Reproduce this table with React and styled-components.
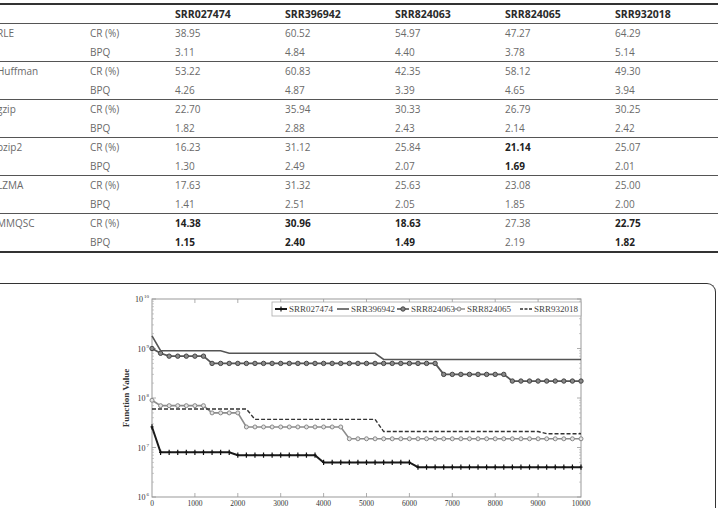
import React from 'react';
import styled, { createGlobalStyle } from 'styled-components';

const GlobalStyle = createGlobalStyle`
  html, body {
    margin: 0;
    padding: 0;
    background: #fff;
    overflow: hidden;
  }
`;

const COLS = '93px 85px 110px 110px 110px 110px 106px';

const Page = styled.div`
  width: 720px;
  height: 508px;
  overflow: hidden;
  font-family: "Open Sans", "Liberation Sans", sans-serif;
`;

const Table = styled.div`
  margin-top: 3px;
  margin-left: -6px;
  width: 724px;
  border-top: 2px solid #333;
`;

const HeaderRow = styled.div`
  display: grid;
  grid-template-columns: ${COLS};
  height: 18px;
  align-items: center;
  border-bottom: 1px solid #555;
  font-size: 10.5px;
  font-weight: 700;
  color: #2a2a2a;
`;

const Group = styled.div`
  border-bottom: ${(p) => (p.$last ? '2px solid #333' : '1px solid #555')};
`;

const Row = styled.div`
  display: grid;
  grid-template-columns: ${COLS};
  height: 18.5px;
  align-items: center;
  font-size: 10px;
  color: #6a6a6a;
`;

const Cell = styled.div`
  padding-left: 3px;
  white-space: nowrap;
  font-weight: ${(p) => (p.$bold ? 700 : 'inherit')};
  color: ${(p) => (p.$bold ? '#222' : 'inherit')};
`;

const Card = styled.div`
  margin-top: 30px;
  margin-left: -12px;
  width: 728px;
  height: 240px;
  box-sizing: border-box;
  border: 1px solid #333;
  border-bottom: none;
  border-radius: 0 9px 0 0;
  padding: 6px 0 0 121px;
`;

const Chart = styled.svg`
  display: block;
  overflow: visible;
  font-family: "Liberation Serif", "DejaVu Serif", serif;
`;

const datasets = ['SRR027474', 'SRR396942', 'SRR824063', 'SRR824065', 'SRR932018'];

const methods = [
  { name: 'RLE', cr: ['38.95', '60.52', '54.97', '47.27', '64.29'], bpq: ['3.11', '4.84', '4.40', '3.78', '5.14'] },
  { name: 'Huffman', cr: ['53.22', '60.83', '42.35', '58.12', '49.30'], bpq: ['4.26', '4.87', '3.39', '4.65', '3.94'] },
  { name: 'gzip', cr: ['22.70', '35.94', '30.33', '26.79', '30.25'], bpq: ['1.82', '2.88', '2.43', '2.14', '2.42'] },
  { name: 'bzip2', cr: ['16.23', '31.12', '25.84', '*21.14', '25.07'], bpq: ['1.30', '2.49', '2.07', '*1.69', '2.01'] },
  { name: 'LZMA', cr: ['17.63', '31.32', '25.63', '23.08', '25.00'], bpq: ['1.41', '2.51', '2.05', '1.85', '2.00'] },
  { name: 'MMQSC', cr: ['*14.38', '*30.96', '*18.63', '27.38', '*22.75'], bpq: ['*1.15', '*2.40', '*1.49', '2.19', '*1.82'] },
];

const Value = ({ v }) => {
  const bold = v.startsWith('*');
  return <Cell $bold={bold}>{bold ? v.slice(1) : v}</Cell>;
};

// chart geometry (svg coords)
const X0 = 42;
const X1 = 471;
const Y0 = 9;
const Y1 = 207;
const DEC = 49.5;
const sx = (v) => X0 + (v * (X1 - X0)) / 10000;
const sy = (v) => Y1 - (Math.log10(v) - 6) * DEC;

const series = [
  { id: 'SRR824065', steps: [[0, 9e7], [200, 7e7], [1400, 5e7], [2200, 2.6e7], [4600, 1.5e7]], color: '#8c8c8c', width: 1.6, marker: 'ring' },
  { id: 'SRR932018', steps: [[0, 6e7], [2400, 3.7e7], [5400, 2.1e7], [9200, 1.9e7]], color: '#333', width: 1.4, dash: '4 2' },
  { id: 'SRR824063', steps: [[0, 1e9], [200, 8e8], [400, 7e8], [1400, 5e8], [6800, 3e8], [8400, 2.2e8]], color: '#555', width: 1.8, marker: 'dot' },
  { id: 'SRR396942', steps: [[0, 1.8e9], [200, 9e8], [1800, 8e8], [5400, 6e8]], color: '#555', width: 1.6 },
  { id: 'SRR027474', steps: [[0, 2.6e7], [200, 8e6], [2000, 7e6], [4000, 5e6], [6200, 4e6]], color: '#1a1a1a', width: 2, marker: 'plus' },
];

const valueAt = (steps, x) => {
  let val = steps[0][1];
  for (const [s, v] of steps) if (x >= s) val = v;
  return val;
};

const samples = Array.from({ length: 51 }, (_, i) => i * 200);

const Marker = ({ kind, x, y }) => {
  if (kind === 'plus') return <path d={`M${x} ${y - 2.6}V${y + 2.6}M${x - 1.5} ${y}H${x + 1.5}`} stroke="#111" strokeWidth="1.2" />;
  if (kind === 'dot') return <circle cx={x} cy={y} r="2.2" fill="#8a8a8a" stroke="#444" strokeWidth="1" />;
  if (kind === 'ring') return <circle cx={x} cy={y} r="2" fill="#e4e4e4" stroke="#888" strokeWidth="1" />;
  return null;
};

const Series = ({ s }) => {
  const pts = samples.map((x) => [sx(x), sy(valueAt(s.steps, x))]);
  return (
    <g>
      <polyline
        points={pts.map((p) => p.join(',')).join(' ')}
        fill="none"
        stroke={s.color}
        strokeWidth={s.width}
        strokeDasharray={s.dash}
      />
      {s.marker && pts.map(([x, y], i) => <Marker key={i} kind={s.marker} x={x} y={y} />)}
    </g>
  );
};

const Axes = () => {
  const ticks = [];
  for (let d = 6; d <= 10; d++) {
    const y = sy(Math.pow(10, d));
    ticks.push(<path key={`M${d}`} d={`M${X0} ${y}h4M${X1} ${y}h-4`} stroke="#999" strokeWidth="0.8" />);
    if (d < 10) {
      for (let m = 2; m <= 9; m++) {
        const ym = sy(m * Math.pow(10, d));
        ticks.push(<path key={`m${d}${m}`} d={`M${X0} ${ym}h2M${X1} ${ym}h-2`} stroke="#aaa" strokeWidth="0.6" />);
      }
    }
  }
  for (let k = 1; k < 10; k++) {
    const x = sx(k * 1000);
    ticks.push(<path key={`x${k}`} d={`M${x} ${Y1}v-4M${x} ${Y0}v4`} stroke="#999" strokeWidth="0.8" />);
  }
  return (
    <g>
      <rect x={X0} y={Y0} width={X1 - X0} height={Y1 - Y0} fill="#fff" stroke="#999" strokeWidth="1" />
      {ticks}
      {[6, 7, 8, 9, 10].map((d) => (
        <text key={d} x={X0 - 3} y={sy(Math.pow(10, d)) + 3} fontSize="8" fill="#333" textAnchor="end">
          10
          <tspan fontSize="5" dx="1" dy="-4">{d}</tspan>
        </text>
      ))}
      {Array.from({ length: 11 }, (_, k) => (
        <text key={k} x={sx(k * 1000)} y={Y1 + 9} fontSize="7.5" fill="#333" textAnchor="middle">
          {k * 1000}
        </text>
      ))}
      <text
        transform={`translate(19 ${(Y0 + Y1) / 2}) rotate(-90)`}
        fontSize="9"
        fontWeight="700"
        fill="#333"
        textAnchor="middle"
      >
        Function Value
      </text>
    </g>
  );
};

const legend = [
  { label: 'SRR027474', x: 165, color: '#1a1a1a', width: 2, marker: 'plus' },
  { label: 'SRR396942', x: 227, color: '#555', width: 1.6 },
  { label: 'SRR824063', x: 287, color: '#555', width: 1.6, marker: 'dot' },
  { label: 'SRR824065', x: 343, color: '#8c8c8c', width: 1.4, marker: 'ring' },
  { label: 'SRR932018', x: 410, color: '#333', width: 1.4, dash: '3 1.5' },
];

const Legend = () => (
  <g>
    <rect x="162" y="12" width="309" height="14" fill="#fff" stroke="#aaa" strokeWidth="0.8" />
    {legend.map((l) => (
      <g key={l.label}>
        <line x1={l.x} x2={l.x + 12} y1="19" y2="19" stroke={l.color} strokeWidth={l.width} strokeDasharray={l.dash} />
        <Marker kind={l.marker} x={l.x + 6} y={19} />
        <text x={l.x + 14} y="22.2" fontSize="9" fill="#444">{l.label}</text>
      </g>
    ))}
  </g>
);

export default function App() {
  return (
    <Page>
      <GlobalStyle />
      <Table>
        <HeaderRow>
          <Cell />
          <Cell />
          {datasets.map((d) => (
            <Cell key={d}>{d}</Cell>
          ))}
        </HeaderRow>
        {methods.map((m, i) => (
          <Group key={m.name} $last={i === methods.length - 1}>
            <Row>
              <Cell>{m.name}</Cell>
              <Cell>CR (%)</Cell>
              {m.cr.map((v, j) => <Value key={j} v={v} />)}
            </Row>
            <Row>
              <Cell />
              <Cell>BPQ</Cell>
              {m.bpq.map((v, j) => <Value key={j} v={v} />)}
            </Row>
          </Group>
        ))}
      </Table>
      <Card>
        <Chart width="480" height="225" viewBox="0 0 480 225">
          <Axes />
          {series.map((s) => <Series key={s.id} s={s} />)}
          <Legend />
        </Chart>
      </Card>
    </Page>
  );
}
